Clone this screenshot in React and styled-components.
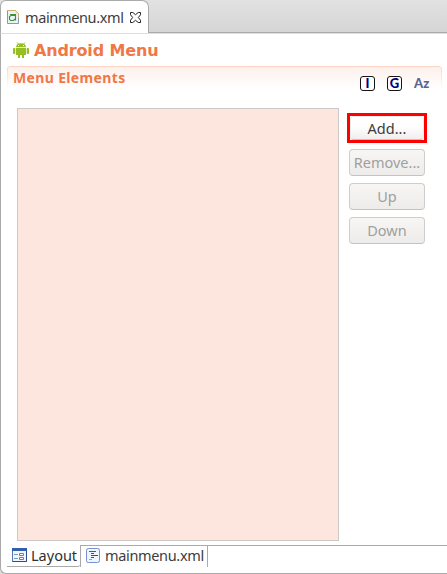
import React from 'react';
import styled, { createGlobalStyle } from 'styled-components';

const GlobalStyle = createGlobalStyle`
  * { box-sizing: border-box; }
  body { margin: 0; background: #fff; overflow: hidden; }
  svg { display: block; flex: none; }
`;

const Window = styled.div`
  width: 447px;
  height: 574px;
  display: flex;
  flex-direction: column;
  background: #dcdcdc;
  font-family: "Noto Sans", "Open Sans", sans-serif;
  font-size: 14.5px;
  color: #3c3c3c;
`;

const TabBar = styled.div`
  height: 33px;
  flex: none;
  display: flex;
  background: linear-gradient(#e2e2e2, #d5d5d5);
`;

const EditorTab = styled.div`
  width: 149px;
  display: flex;
  align-items: center;
  padding: 0 0 0 6px;
  background: #fff;
  border: 1px solid #aaa;
  border-bottom: 0;
  border-radius: 6px 7px 0 0;
`;

const TabRest = styled.div`
  flex: 1;
  border-bottom: 1px solid #aaa;
`;

const Label = styled.span`
  white-space: nowrap;
  line-height: 20px;
  letter-spacing: ${(p) => p.$spacing || 0}px;
  margin-left: ${(p) => p.$left || 0}px;
  width: ${(p) => (p.$width ? `${p.$width}px` : 'auto')};
`;

const Editor = styled.main`
  flex: 1;
  min-height: 0;
  display: flex;
  flex-direction: column;
  background: #fff;
  border: 1px solid #aaa;
  border-top-color: #dedede;
  border-right: 0;
  border-bottom-left-radius: 6px;
`;

const Header = styled.header`
  height: 32px;
  flex: none;
  display: flex;
  align-items: center;
  padding-left: 12px;
`;

const Title = styled.h1`
  margin: 2px 0 0 5px;
  font: bold 16px/20px "DejaVu Sans", sans-serif;
  letter-spacing: -0.15px;
  color: #f07746;
  white-space: nowrap;
`;

const SectionHeader = styled.div`
  height: 42px;
  flex: none;
  margin: 0 5px 0 6px;
  padding-left: 6px;
  display: flex;
  align-items: flex-start;
  border-top: 1px solid #fad5c5;
  border-radius: 4px 4px 0 0;
  background:
    linear-gradient(#fad5c5, #fff) 0 0 / 1px 22px no-repeat,
    linear-gradient(#fad5c5, #fff) 100% 0 / 1px 22px no-repeat,
    linear-gradient(#fdf0eb, #fff 22px);
`;

const SectionTitle = styled.h2`
  flex: 1;
  margin: 1px 0 0;
  font: bold 14px/20px "Noto Sans", sans-serif;
  letter-spacing: 0.35px;
  color: #f07746;
`;

const Tools = styled.div`
  display: flex;
  gap: 12px;
  padding: 9px 12px 0 0;
`;

const LetterTool = styled.span`
  width: 15px;
  height: 15px;
  padding-bottom: 1px;
  display: flex;
  align-items: center;
  justify-content: center;
  border: 1px solid #151515;
  border-radius: 3px;
  background: #fff;
  color: #000080;
  font: 900 13px/12px Lato, sans-serif;
`;

const SortTool = styled.span`
  width: 16px;
  font: 900 13px/15px Lato, sans-serif;
  letter-spacing: 0.2px;
  color: #5c6393;
`;

const Body = styled.div`
  height: 433px;
  flex: none;
  display: flex;
  padding-left: 16px;
`;

const ElementList = styled.div`
  width: 322px;
  height: 433px;
  background: #fce6de;
  border: 1px solid #ccc9c7;
`;

const Actions = styled.div`
  display: flex;
  flex-direction: column;
  align-items: center;
  gap: 7px;
  margin: 5px 0 0 8px;
`;

const Highlight = styled.div`
  width: 80px;
  height: 30px;
  margin-bottom: -1px;
  padding: 0;
  border: 3px solid #fe0000;
`;

const Button = styled.button`
  width: ${(p) => (p.$inset ? 74 : 76)}px;
  height: ${(p) => (p.$inset ? 24 : 27)}px;
  padding: 0 0 1px;
  display: flex;
  align-items: center;
  justify-content: center;
  border: 1px solid ${(p) => (p.$inset ? '#f0efee' : '#cfcdca')};
  border-bottom-color: #c5c3c1;
  border-radius: 4px;
  background: ${(p) => (p.$inset ? 'linear-gradient(#fff 40%, #f0efee)' : 'linear-gradient(#f7f6f5, #edecea)')};
  color: ${(p) => (p.disabled ? '#a09f9e' : '#3c3c3c')};
  font: 14.5px/20px "Noto Sans", sans-serif;
`;

const PageTabs = styled.nav`
  height: 28px;
  flex: none;
  margin-top: 4px;
  display: flex;
  align-items: flex-start;
`;

const ActiveTab = styled.div`
  width: 74px;
  height: 22px;
  margin-left: 6px;
  padding: 0 0 1px 5px;
  display: flex;
  align-items: center;
  border-bottom: 1px solid #aaa;
  border-bottom-right-radius: 4px;
  color: #303030;
`;

const PageTab = styled.div`
  width: 128px;
  height: 22px;
  margin-left: -1px;
  padding: 0 0 3px 5px;
  display: flex;
  align-items: center;
  border: 1px solid #aaa;
  border-bottom: 0;
`;

const PageRule = styled.div`
  flex: 1;
  height: 1px;
  background: #aaa;
`;

const FileIcon = () => (
  <svg width="13" height="16" viewBox="0 0 13 16">
    <path d="M.5 1.5h8l3 3v10H.5z" fill="#eaf1f8" stroke="#8799ac" />
    <path d="M.5 1.5h8l3 3v4" fill="none" stroke="#cfae72" />
    <path d="M8.5 2v2.5h3z" fill="#f2d99c" />
    <path d="M3 5.5h5.5v6M8 6.5H4l-1.5 1v2.5l1 1.5h3L8 10" fill="none" stroke="#3d9130" strokeWidth="1.1" />
  </svg>
);

const CloseIcon = () => (
  <svg width="11" height="11" viewBox="0 0 11 11" fill="#fff" stroke="#222">
    <path d="M.5.5h2.3l2.7 2.2L8.2.5h2.3v2.3L8.3 5.5l2.2 2.7v2.3H8.2L5.5 8.3l-2.7 2.2H.5V8.2l2.2-2.7L.5 2.8z" />
  </svg>
);

const RobotIcon = () => (
  <svg width="16" height="17" viewBox="0 0 16 17" fill="#97bf24">
    <path d="M3 5.3C3 2.6 5 1.3 8 1.3s5 1.3 5 4zM3 6h10v7H3z" />
    <path d="M4 .5l2 2M12 .5l-2 2" stroke="#97bf24" />
    <rect y="6" width="2.3" height="6" rx=".7" />
    <rect x="13.7" y="6" width="2.3" height="6" rx=".7" />
    <rect x="5" y="12" width="2" height="4" rx=".3" />
    <rect x="9" y="12" width="2" height="4" rx=".3" />
    <path d="M5 3h1v1H5zM10 3h1v1h-1z" fill="#fff" />
  </svg>
);

const FormIcon = () => (
  <svg width="15" height="14" viewBox="0 0 15 14">
    <path d="M.5.5h14v13H.5z" fill="#eff6fd" stroke="#5574b4" />
    <path d="M0 0h15v3H0z" fill="#315fac" />
    <path d="M14.5 3v10.5H.5" fill="none" stroke="#284b94" />
    <path d="M2 6.5h4M2 10.5h4" stroke="#8299be" />
    <path d="M7.5 5.5h4v2h-4zM7.5 9.5h4v2h-4z" fill="#fff" stroke="#657fac" />
  </svg>
);

const SourceIcon = () => (
  <svg width="14" height="15" viewBox="0 0 14 15">
    <rect x=".5" y=".5" width="13" height="14" rx="1.8" fill="#eef5ff" stroke="#7892cf" />
    <path d="M3 3.5h7" stroke="#237742" />
    <path d="M5 5.5h3M5 9.5h3" stroke="#a92c34" />
    <path d="M5 7.5h7" stroke="#1556ac" />
    <path d="M3 11.5h3" stroke="#d6a331" />
  </svg>
);

export default function App() {
  return (
    <Window>
      <GlobalStyle />
      <TabBar>
        <EditorTab>
          <FileIcon />
          <Label $left={5} $width={105} $spacing={-0.36}>mainmenu.xml</Label>
          <CloseIcon />
        </EditorTab>
        <TabRest />
      </TabBar>
      <Editor>
        <Header>
          <RobotIcon />
          <Title>Android Menu</Title>
        </Header>
        <SectionHeader>
          <SectionTitle>Menu Elements</SectionTitle>
          <Tools>
            <LetterTool>I</LetterTool>
            <LetterTool>G</LetterTool>
            <SortTool>Az</SortTool>
          </Tools>
        </SectionHeader>
        <Body>
          <ElementList />
          <Actions>
            <Highlight>
              <Button $inset>Add...</Button>
            </Highlight>
            <Button disabled>Remove...</Button>
            <Button disabled>Up</Button>
            <Button disabled>Down</Button>
          </Actions>
        </Body>
        <PageTabs>
          <ActiveTab>
            <FormIcon />
            <Label $left={4}>Layout</Label>
          </ActiveTab>
          <PageTab>
            <SourceIcon />
            <Label $left={5} $spacing={-0.34}>mainmenu.xml</Label>
          </PageTab>
          <PageRule />
        </PageTabs>
      </Editor>
    </Window>
  );
}
